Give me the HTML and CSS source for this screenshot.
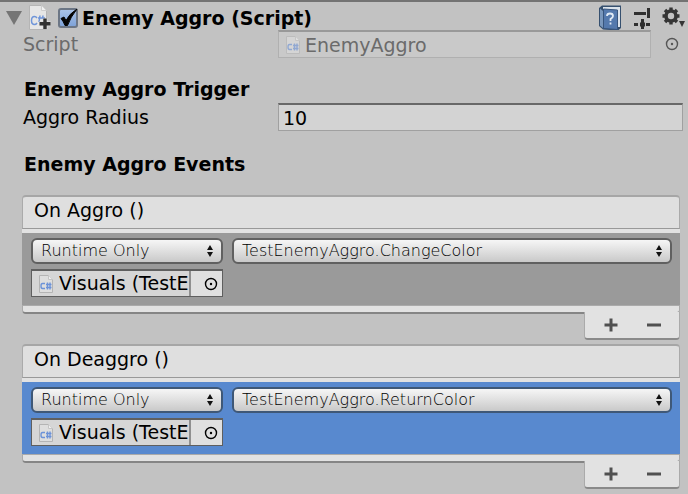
FILE: index.html
```html
<!DOCTYPE html>
<html lang="en">
<head>
<meta charset="utf-8">
<title>Enemy Aggro (Script)</title>
<link rel="stylesheet" href="styles.css">
</head>
<body>
<svg class="defs" width="0" height="0" aria-hidden="true">
  <symbol id="script-file" viewBox="0 0 16 20">
    <path d="M1.500 1.500H10.500L14.500 5.500V18.500H1.500Z" fill="#dedede" stroke="#b4b4b4"/>
    <path d="M10.500 1.500V5.500H14.500" fill="#eee" stroke="#c4c4c4"/>
    <path d="M7 9.500H4.500Q3 9.500 3 12T4.500 14.500H7M9.500 8.500V15.500M12 8.500V15.500M8 10.500H13.500M8 13.500H13.500" fill="none" stroke="#6d93d8" stroke-width="1.400"/>
  </symbol>
  <symbol id="picker" viewBox="0 0 14 14">
    <circle cx="7" cy="7" r="5.500" fill="none" stroke="currentColor" stroke-width="1.400"/>
    <circle cx="7" cy="7" r="1.200" fill="currentColor"/>
  </symbol>
  <symbol id="arrows" viewBox="0 0 6 12">
    <path d="M3 0L6 5H0ZM3 12L6 7H0Z" fill="#111"/>
  </symbol>
  <symbol id="plus" viewBox="0 0 14 14">
    <path d="M7 .5V13.500M.5 7H13.500" stroke="#505050" stroke-width="3"/>
  </symbol>
  <symbol id="minus" viewBox="0 0 14 14">
    <path d="M0 7H14" stroke="#505050" stroke-width="3"/>
  </symbol>
</svg>
<main class="inspector">
  <header class="component">
    <button class="icon-button" aria-label="Collapse"><svg width="16" height="14" viewBox="0 0 16 14"><path d="M0 0H16L8 14Z" fill="#757575"/></svg></button>
    <svg class="component-icon" width="24" height="26" viewBox="0 0 24 26">
      <path d="M1.500 .5H13.500L18.500 5.500V24.500H1.500Z" fill="#e6e6e6" stroke="#b5b5b5"/>
      <path d="M13.500 .5V5.500H18.500" fill="#f2f2f2" stroke="#cdcdcd"/>
      <path d="M9 13Q8 11.500 6.500 11.500Q3.500 11.500 3.500 15.500T6.500 19.500Q8 19.500 9 18M12 10.500L11 17M15 10.500L14.500 14M10 13H17" fill="none" stroke="#6f95d9" stroke-width="1.500"/>
      <path d="M17 13.500V24M11.500 18.700H22.500" stroke="#ddd" stroke-width="5"/>
      <path d="M17 13.500V24M11.500 18.700H22.500" stroke="#303030" stroke-width="3.400"/>
    </svg>
    <label class="enable">
      <input type="checkbox" checked>
      <svg class="tick" width="20" height="20" viewBox="0 0 20 20"><path d="M3 10.500L6 9L8 12.500Q11 6 19 1Q12.500 9 9.500 17.500H7Q5.500 13.500 3 10.500Z" fill="#050505" stroke="#050505"/></svg>
      <span class="title">Enemy Aggro (Script)</span>
    </label>
    <div class="tools">
      <button class="icon-button" aria-label="Help"><svg width="24" height="26" viewBox="0 0 24 26">
        <path d="M1 3L4 .5H23V23L20 25.500L5 24.500L1 21Z" fill="#36506f"/>
        <path d="M5 2H22V22H5Z" fill="#dbe3ec"/>
        <path d="M2 3.500L5 6V23L2 20.500Z" fill="#7997bc"/>
        <path d="M5.500 4L19.500 5V24.500L5.500 23.500Z" fill="#5479ad" stroke="#38557d"/>
        <path d="M9 11Q9 8.500 12 8.500T15 11Q15 12.500 12.500 14V16M12.500 17.500V19.500" fill="none" stroke="#e0eaf5" stroke-width="1.800"/>
      </svg></button>
      <button class="icon-button" aria-label="Presets"><svg width="18" height="22" viewBox="0 0 18 22">
        <path d="M1 6.500H13M1 17.500H5M13 17.500H17" stroke="#303030" stroke-width="3"/>
        <path d="M15.500 1V11M9.500 12V22" stroke="#303030" stroke-width="3"/>
        <path d="M7 17.500H12" stroke="#303030" stroke-width="4"/>
      </svg></button>
      <button class="icon-button" aria-label="Settings"><svg width="24" height="22" viewBox="0 0 24 22">
        <circle cx="9" cy="9" r="5" fill="none" stroke="#353535" stroke-width="3.600"/>
        <path d="M9 .5V4M9 14V17.500M.5 9H4M14 9H17.500M3 3L5.500 5.500M12.500 12.500L15 15M3 15L5.500 12.500M12.500 5.500L15 3" stroke="#353535" stroke-width="3.400"/>
        <path d="M17 14H23L20 20Z" fill="#353535"/>
      </svg></button>
    </div>
  </header>

  <div class="row script-row">
    <label for="script">Script</label>
    <div class="field disabled"><svg class="file" width="16" height="20"><use href="#script-file"/></svg><input id="script" value="EnemyAggro" disabled></div>
    <button class="icon-button pick" aria-label="Select script"><svg width="14" height="14"><use href="#picker"/></svg></button>
  </div>

  <h2>Enemy Aggro Trigger</h2>
  <div class="row">
    <label for="radius">Aggro Radius</label>
    <div class="field"><input id="radius" value="10"></div>
  </div>
  <h2 class="events-title">Enemy Aggro Events</h2>

  <section class="event">
    <h3>On Aggro ()</h3>
    <div class="entry">
      <div class="popup"><select aria-label="Call state"><option>Runtime Only</option></select><svg width="6" height="12"><use href="#arrows"/></svg></div>
      <div class="popup"><select aria-label="Function"><option>TestEnemyAggro.ChangeColor</option></select><svg width="6" height="12"><use href="#arrows"/></svg></div>
      <div class="object">
        <svg class="file" width="16" height="20"><use href="#script-file"/></svg>
        <span class="object-name">Visuals (TestEnemyAggro)</span>
        <button class="icon-button" aria-label="Select object"><svg width="14" height="14"><use href="#picker"/></svg></button>
      </div>
    </div>
    <div class="base"></div>
    <div class="footer">
      <button class="icon-button" aria-label="Add"><svg width="14" height="14"><use href="#plus"/></svg></button>
      <button class="icon-button" aria-label="Remove"><svg width="14" height="14"><use href="#minus"/></svg></button>
    </div>
  </section>

  <section class="event selected">
    <h3>On Deaggro ()</h3>
    <div class="entry">
      <div class="popup"><select aria-label="Call state"><option>Runtime Only</option></select><svg width="6" height="12"><use href="#arrows"/></svg></div>
      <div class="popup"><select aria-label="Function"><option>TestEnemyAggro.ReturnColor</option></select><svg width="6" height="12"><use href="#arrows"/></svg></div>
      <div class="object">
        <svg class="file" width="16" height="20"><use href="#script-file"/></svg>
        <span class="object-name">Visuals (TestEnemyAggro)</span>
        <button class="icon-button" aria-label="Select object"><svg width="14" height="14"><use href="#picker"/></svg></button>
      </div>
    </div>
    <div class="base"></div>
    <div class="footer">
      <button class="icon-button" aria-label="Add"><svg width="14" height="14"><use href="#plus"/></svg></button>
      <button class="icon-button" aria-label="Remove"><svg width="14" height="14"><use href="#minus"/></svg></button>
    </div>
  </section>
</main>
</body>
</html>
```
FILE: styles.css
```css
* { box-sizing: border-box; }
body {
  margin: 0;
  background: #c2c2c2;
  color: #000;
  font: 19px/28px "DejaVu Sans", Verdana, sans-serif;
}
.defs { position: absolute; }
svg { display: block; flex: none; }
.inspector { border-top: 2px solid #737373; }
h2, h3 { margin: 0; font-size: 19px; line-height: 28px; }
h2 { padding-left: 24px; margin-top: 17px; }
.events-title { margin: 19px 0 17px; }
h3 { font-weight: 400; }
input, select, button { font: inherit; color: inherit; }
.icon-button {
  display: flex;
  align-items: center;
  justify-content: center;
  padding: 0;
  border: 0;
  background: none;
}

.component {
  display: flex;
  align-items: center;
  height: 28px;
  padding: 3px 2px 0 6px;
}
.component-icon { margin: 0 6px; }
.enable { display: flex; align-items: center; gap: 4px; position: relative; }
.enable input {
  appearance: none;
  width: 20px;
  height: 20px;
  margin: 0;
  border: 2px solid #6c7685;
  border-radius: 3px;
  background: linear-gradient(#a9c3e8, #7fa3d8);
}
.tick { position: absolute; left: 0; top: 4px; pointer-events: none; }
.title { font-weight: 700; }
.tools { display: flex; align-items: center; gap: 11px; margin-left: auto; }

.row {
  display: grid;
  grid-template-columns: 255px 1fr;
  padding: 0 5px 0 23px;
}
.script-row { grid-template-columns: 255px 1fr 32px; padding-right: 5px; }
.script-row label { color: #6b6b6b; }
.pick { color: #555; justify-content: flex-end; padding-right: 4px; }
.field {
  display: flex;
  align-items: center;
  gap: 4px;
  height: 28px;
  padding: 0 4px;
  border: 1px solid #a0a0a0;
  border-top: 2px solid #686868;
  background: #d3d3d3;
}
.field input {
  flex: 1;
  min-width: 0;
  height: 24px;
  padding: 0;
  border: 0;
  background: none;
}
.disabled { padding-left: 6px; border-color: #b0b0b0; border-top-color: #999; background: #c9c9c9; color: #6b6b6b; }
.disabled .file { opacity: .6; }

.event { margin: 0 8px 4px 22px; }
.event h3 {
  height: 34px;
  padding: 0 11px;
  border: 1px solid #aaa;
  border-top: 2px solid #a6a6a6;
  border-bottom-color: #999;
  border-radius: 4px 4px 0 0;
  background: #dfdfdf;
  line-height: 26px;
}
.entry {
  display: grid;
  grid-template-columns: 192px 1fr;
  grid-template-rows: 26px 28px;
  gap: 5px 9px;
  padding: 5px 8px 8px 9px;
  border-top: 4px solid #e2e2e2;
  background: #9a9a9a;
}
.selected .entry { background: #5889cf; }
.popup { position: relative; height: 26px; }
.popup select {
  appearance: none;
  display: block;
  width: 100%;
  height: 26px;
  padding: 0 24px 0 8px;
  border: 2px solid #606060;
  border-radius: 6px;
  background: linear-gradient(#f6f6f6, #c9c9c9);
  font-size: 16px;
  font-weight: 200;
  line-height: 20px;
}
.selected .popup select { border-color: #3f5877; }
.popup svg { position: absolute; right: 10px; top: 7px; pointer-events: none; }
.object {
  display: flex;
  align-items: center;
  height: 28px;
  padding-left: 6px;
  border: 1px solid #5f5f5f;
  border-top-width: 2px;
  background: #d6d6d6;
}
.object-name { flex: 1; min-width: 0; margin-left: 5px; overflow: hidden; white-space: nowrap; line-height: 25px; }
.object button { width: 33px; height: 25px; margin-left: 1px; padding-left: 8px; border-left: 2px solid #909090; background: #e0e0e0; }
.base {
  height: 9px;
  border: 1px solid #aaa;
  border-bottom: 2px solid #858585;
  border-radius: 0 0 4px 4px;
  background: #e2e2e2;
}
.footer {
  display: flex;
  align-items: center;
  justify-content: space-around;
  width: 96px;
  height: 28px;
  margin: -2px 0 0 auto;
  padding: 0 4px;
  position: relative;
  border: 1px solid #aaa;
  border-top: 0;
  border-bottom: 2px solid #8a8a8a;
  border-radius: 0 0 4px 4px;
  background: #e2e2e2;
}
```
